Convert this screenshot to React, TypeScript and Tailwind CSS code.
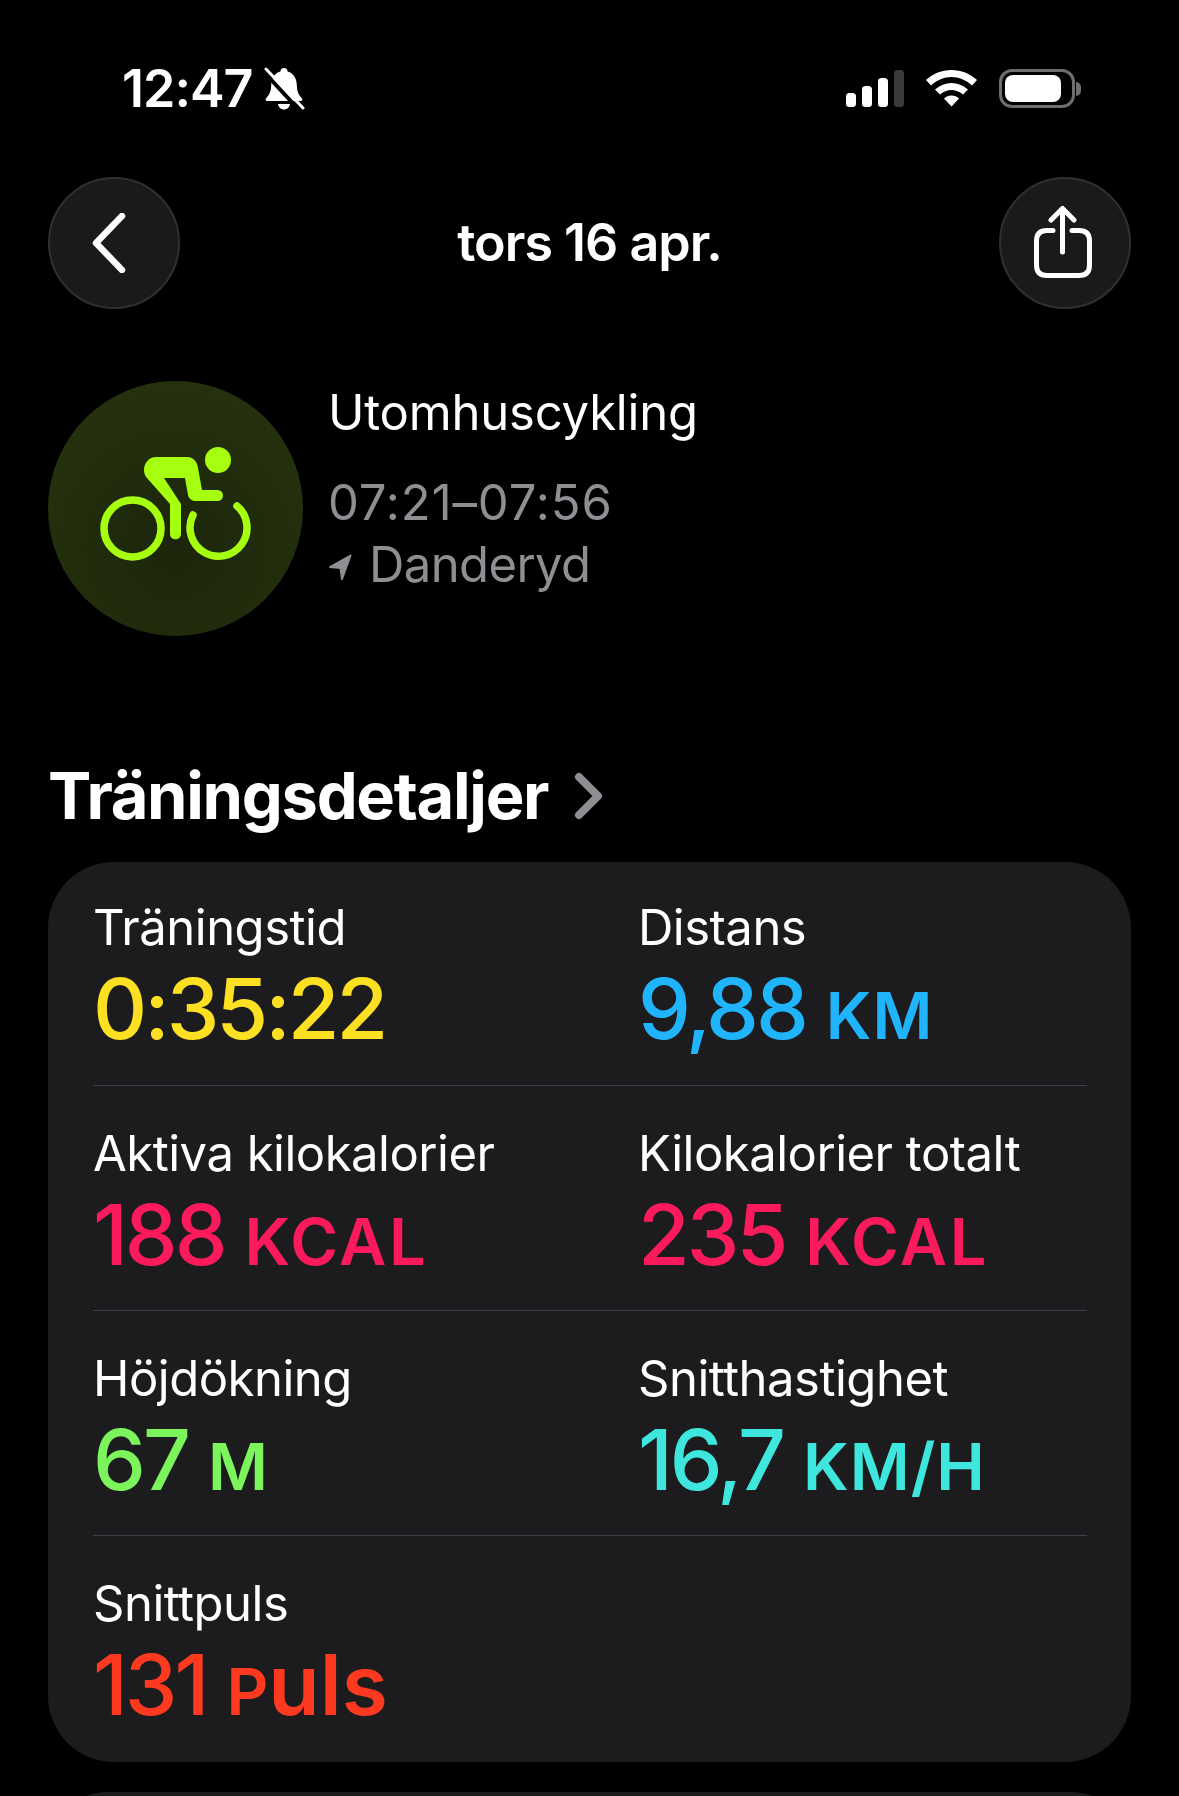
import React from 'react';

const FONT = { fontFamily: 'Inter, "Noto Sans", sans-serif' };

type Metric = { label: string; value: string; unit?: string; color: string };

const rows: Metric[][] = [
  [
    { label: 'Träningstid', value: '0:35:22', color: 'text-[#fde021]' },
    { label: 'Distans', value: '9,88', unit: 'KM', color: 'text-[#1fb4fb]' },
  ],
  [
    { label: 'Aktiva kilokalorier', value: '188', unit: 'KCAL', color: 'text-[#fb1a5c]' },
    { label: 'Kilokalorier totalt', value: '235', unit: 'KCAL', color: 'text-[#fb1a5c]' },
  ],
  [
    { label: 'Höjdökning', value: '67', unit: 'M', color: 'text-[#7cf45c]' },
    { label: 'Snitthastighet', value: '16,7', unit: 'KM/H', color: 'text-[#3ee6dd]' },
  ],
  [{ label: 'Snittpuls', value: '131', unit: 'Puls', color: 'text-[#fd3a20]' }],
];

function MetricCell({ metric, first }: { metric: Metric; first: boolean }) {
  return (
    <div className={first ? 'w-[545px] shrink-0' : 'flex-1'}>
      <div className="text-[49px] leading-[58px] tracking-[-0.5px] font-[380] text-white">{metric.label}</div>
      <div className={`mt-[2px] flex items-baseline gap-[20px] h-[100px] leading-[100px] font-medium ${metric.color}`}>
        <span className="text-[84px] tracking-[-3px]">{metric.value}</span>
        {metric.unit === 'Puls' ? (
          <span className="text-[65px] font-semibold">
            P<span className="text-[84px]">uls</span>
          </span>
        ) : (
          metric.unit && (
            <span className={`text-[65px] font-semibold ${metric.unit === 'KCAL' ? 'tracking-[2.5px]' : 'tracking-[1px]'}`}>
              {metric.unit}
            </span>
          )
        )}
      </div>
    </div>
  );
}

export default function App() {
  return (
    <div className="w-[1179px] h-[1796px] overflow-hidden bg-black text-white" style={FONT}>
      {/* Status bar */}
      <div className="flex items-center justify-between h-[177px] pl-[122px] pr-[98px]">
        <div className="flex items-center gap-[10px]">
          <span className="text-[52px] font-semibold tracking-[-1px]">12:47</span>
          <svg width="42" height="44" viewBox="0 0 42 44" fill="none">
            <path d="M21 1c2.200 0 3.600 1.600 3.600 3.600C31 6.400 33.600 12 33.800 18c.2 5.600 1.200 9 5.200 13.500 1 1.200.3 2.500-1.200 2.500H4.200C2.700 34 2 32.700 3 31.500 7 27 8 23.600 8.200 18 8.400 12 11 6.400 17.400 4.600 17.400 2.600 18.800 1 21 1Z" fill="#fff" />
            <path d="M15 37h12c-.5 3.400-3 5.500-6 5.500S15.500 40.400 15 37Z" fill="#fff" />
            <path d="M1 5l36 39" stroke="#000" strokeWidth="4" />
            <path d="M3 2l37 39" stroke="#fff" strokeWidth="3" strokeLinecap="round" />
          </svg>
        </div>
        <div className="flex items-center gap-[22px]">
          <svg width="58" height="37" viewBox="0 0 58 37">
            <rect x="0" y="23" width="10" height="14" rx="3.500" fill="#fff" />
            <rect x="16" y="16" width="10" height="21" rx="3.500" fill="#fff" />
            <rect x="32" y="8" width="10" height="29" rx="3.500" fill="#fff" />
            <rect x="48" y="0" width="10" height="37" rx="3.500" fill="#3a3a3c" />
          </svg>
          <svg width="51" height="37" viewBox="0 0 51 37" fill="#fff">
            <path d="M25.500 0C35 0 44 3.500 51 10l-5 5.500C40 10 33 7 25.500 7S11 10 5 15.500L0 10C7 3.500 16 0 25.500 0Z" />
            <path d="M25.500 13c6 0 11.500 2.300 16.500 6.500l-5 5c-3.500-3-7.500-4.500-11.500-4.500S17.500 21.500 14 24.500l-5-5C14 15.300 19.500 13 25.500 13Z" />
            <path d="M25.500 25.500c3 0 5.500 1 7.500 3l-7.500 8-7.500-8c2-2 4.500-3 7.500-3Z" />
          </svg>
          <div className="flex items-center">
            <div className="w-[76px] h-[39px] rounded-[13px] border-[3px] border-[#6e6e70] p-[3px]">
              <div className="w-[56px] h-full rounded-[8px] bg-white" />
            </div>
            <div className="w-[5px] h-[14px] ml-[1px] rounded-r-full bg-[#6e6e70]" />
          </div>
        </div>
      </div>

      {/* Nav */}
      <div className="flex items-center justify-between px-[48px] h-[132px]">
        <div className="flex items-center justify-center w-[132px] h-[132px] rounded-full bg-[#1a1a1b] border-[2px] border-[#303032]">
          <svg width="40" height="60" viewBox="0 0 40 60" fill="none" className="mr-[8px]">
            <path d="M32 3 6 30l26 27" stroke="#fff" strokeWidth="6.500" strokeLinecap="round" strokeLinejoin="round" />
          </svg>
        </div>
        <div className="text-[52px] font-semibold tracking-[-1px]">tors 16 apr.</div>
        <div className="flex items-center justify-center w-[132px] h-[132px] rounded-full bg-[#1a1a1b] border-[2px] border-[#303032]">
          <svg width="60" height="76" viewBox="0 0 60 76" fill="none" className="mr-[3px]">
            <path d="M20 25.500h-6C7 25.500 3.500 29 3.500 36v24c0 7 3.500 10.500 10.500 10.500h32c7 0 10.500-3.500 10.500-10.500V36c0-7-3.500-10.500-10.500-10.500h-7" stroke="#fff" strokeWidth="5" strokeLinecap="round" />
            <path d="M29.500 47V4M18 15 29.500 3.500 41 15" stroke="#fff" strokeWidth="5" strokeLinecap="round" strokeLinejoin="round" />
          </svg>
        </div>
      </div>

      {/* Workout header */}
      <div className="flex items-start gap-[25px] pl-[48px] mt-[72px] h-[255px]">
        <div className="flex items-center justify-center w-[255px] h-[255px] rounded-full bg-[radial-gradient(circle_at_50%_65%,#1c250b_0%,#28350f_100%)]">
          <svg width="152" height="116" viewBox="0 0 152 116" fill="none" className="mb-[10px]">
            <circle cx="118" cy="14" r="13" fill="#a6ff0f" />
            <circle cx="32.500" cy="82.500" r="28.500" stroke="#a6ff0f" strokeWidth="7.500" />
            <path d="M137 60A28.500 28.500 0 1 1 93 69" stroke="#a6ff0f" strokeWidth="7.500" strokeLinecap="round" />
            <path d="M56 11h31c6 0 10 4 11 11l4 22h15.500a5.500 5.500 0 0 1 0 11H96c-4 0-7-2-8-6l-3-17H64l17 26v30c0 7-11 7-11 0V58L47 32c-7-8-1-21 9-21Z" fill="#a6ff0f" />
          </svg>
        </div>
        <div className="flex flex-col font-[380] pt-[1px]">
          <div className="text-[49px] leading-[62px] tracking-[-0.2px] mb-[28px]">Utomhuscykling</div>
          <div className="text-[49px] leading-[62px] tracking-[0.9px] text-[#8e8e93]">07:21–07:56</div>
          <div className="flex items-center gap-[17px] text-[49px] leading-[62px] tracking-[-0.6px] text-[#8e8e93]">
            <svg width="24" height="27" viewBox="0 0 24 27" className="mt-[4px]">
              <path d="M22.500 1.500 2 13l10.500 1L14 25Z" fill="#8e8e93" stroke="#8e8e93" strokeWidth="2" strokeLinejoin="round" />
            </svg>
            <span>Danderyd</span>
          </div>
        </div>
      </div>

      {/* Section title */}
      <div className="flex items-center gap-[26px] pl-[48px] mt-[128px] h-[64px]">
        <span className="text-[65px] font-bold tracking-[-1.3px]">Träningsdetaljer</span>
        <svg width="30" height="48" viewBox="0 0 30 48" fill="none">
          <path d="M5 5l19 19L5 43" stroke="#8e8e93" strokeWidth="8" strokeLinecap="round" strokeLinejoin="round" />
        </svg>
      </div>

      {/* Metrics card */}
      <div className="mx-[48px] mt-[34px] h-[900px] rounded-[66px] bg-[#1c1c1e] pl-[45px] pr-[44px]">
        {rows.map((row, i) => (
          <div
            key={i}
            className={`flex ${i === 0 ? 'h-[224px] pt-[37px]' : 'h-[225px] pt-[39px]'} ${i < rows.length - 1 ? 'border-b border-[#404044]' : ''}`}
          >
            {row.map((metric, j) => (
              <MetricCell key={metric.label} metric={metric} first={j === 0} />
            ))}
          </div>
        ))}
      </div>

      {/* Next card peeks in at the bottom */}
      <div className="mx-[48px] mt-[30px] h-[60px] rounded-t-[66px] bg-[#1c1c1e]" />
    </div>
  );
}
